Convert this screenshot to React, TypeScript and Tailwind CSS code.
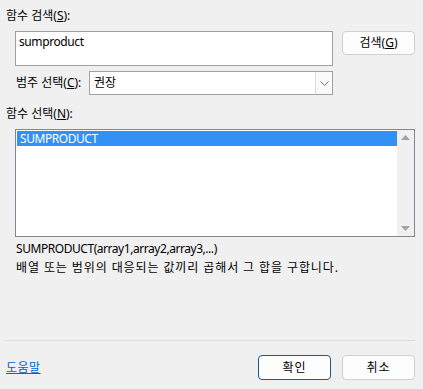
export default function App() {
  return (
    <div
      className="relative h-[389px] w-[423px] overflow-hidden bg-[#f0f0f0] text-[12px] text-[#000]"
      style={{ fontFamily: '"Noto Sans", "Noto Sans CJK KR", sans-serif' }}
    >
      {/* search */}
      <div className="pl-[6px] pt-[8px] leading-[16px]">
        함수 검색(<span className="underline">S</span>):
      </div>
      <div className="mt-[7px] flex items-start pl-[15px]">
        <div className="h-[35px] w-[318px] border border-[#a0a0a0] bg-white px-[3px] pt-[2px] leading-[16px] tracking-[-0.4px]">
          sumproduct
        </div>
        <button className="ml-[9px] h-[24px] w-[73px] rounded-[4px] border border-[#d0d0d0] bg-[#fdfdfd] leading-[16px]">
          검색(<span className="underline">G</span>)
        </button>
      </div>

      {/* category */}
      <div className="mt-[5px] flex h-[24px] items-center">
        <div className="w-[89px] pl-[16px] leading-[16px]">
          범주 선택(<span className="underline">C</span>):
        </div>
        <div className="flex h-[24px] w-[244px] border border-[#a0a0a0] bg-white">
          <div className="flex flex-1 items-center pl-[4px] leading-[16px]">권장</div>
          <div className="flex w-[17px] items-center justify-center border-l border-[#dcdcdc] bg-[#fafafa]">
            <svg width="9" height="5" viewBox="0 0 9 5" fill="none">
              <path d="M0.5 0.5 L4.5 4.5 L8.5 0.5" stroke="#606060" strokeWidth="0.9" />
            </svg>
          </div>
        </div>
      </div>

      {/* function list */}
      <div className="mt-[11px] pl-[6px] leading-[16px]">
        함수 선택(<span className="underline">N</span>):
      </div>
      <div className="ml-[15px] mt-[7px] flex h-[108px] w-[400px] border border-[#828790] bg-white">
        <div className="flex-1 pl-px pt-px">
          <div className="h-[15px] bg-[#3391f5] pl-[3px] leading-[15px] tracking-[-0.45px] text-white">
            SUMPRODUCT
          </div>
        </div>
        <div className="flex w-[17px] flex-col items-center justify-between bg-[#f0f0f0] py-[5px]">
          <svg width="9" height="5" viewBox="0 0 9 5">
            <path d="M0 5 L4.5 0 L9 5 Z" fill="#a3a3a3" />
          </svg>
          <svg width="9" height="5" viewBox="0 0 9 5">
            <path d="M0 0 L4.5 5 L9 0 Z" fill="#a3a3a3" />
          </svg>
        </div>
      </div>

      {/* description */}
      <div className="mt-[4px] pl-[16px] leading-[16px] tracking-[-0.45px]">
        SUMPRODUCT(array1,array2,array3,...)
      </div>
      <div className="mt-[3px] pl-[16px] leading-[16px] tracking-[0.9px]">
        배열 또는 범위의 대응되는 값끼리 곱해서 그 합을 구합니다.
      </div>

      <div className="mx-[5px] mt-[64px] h-px w-[410px] bg-[#dadada]" />

      {/* footer */}
      <div className="mt-[14px] flex items-center pl-[6px] pr-[8px]">
        <span className="leading-[16px] tracking-[0.5px] text-[#0066cc] underline">도움말</span>
        <button className="ml-auto h-[25px] w-[73px] rounded-[4px] border border-[#1d5a8c] bg-[#fdfdfd] leading-[16px] tracking-[1px]">
          확인
        </button>
        <button className="ml-[11px] h-[25px] w-[73px] rounded-[4px] border border-[#d0d0d0] bg-[#fdfdfd] leading-[16px] tracking-[1px]">
          취소
        </button>
      </div>
    </div>
  );
}
